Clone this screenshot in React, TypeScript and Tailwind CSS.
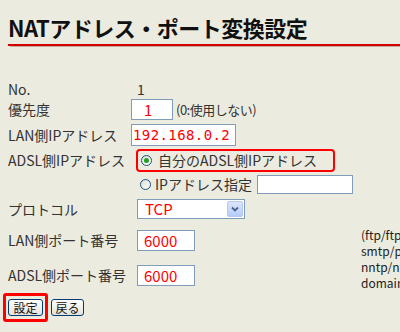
import React from "react";

const font = { fontFamily: '"Noto Sans CJK JP", "DejaVu Sans", sans-serif' };

function Radio({ checked }: { checked?: boolean }) {
  return (
    <span className="relative inline-flex h-[11px] w-[11px] shrink-0 items-center justify-center rounded-full border border-[#1c5180] bg-gradient-to-br from-[#dcdcd5] to-white">
      {checked && <span className="h-[5px] w-[5px] rounded-full bg-[#21a121]" />}
    </span>
  );
}

function Box({ w, children, h = 21 }: { w: number; h?: number; children?: React.ReactNode }) {
  return (
    <div
      className="flex items-center border border-[#7f9db9] bg-white pl-[6px] text-[15px] leading-none text-[#ff0000]"
      style={{ width: w, height: h }}
    >
      {children}
    </div>
  );
}

export default function App() {
  return (
    <div className="h-[332px] w-[400px] overflow-hidden bg-[#ecebdf] text-[#333]" style={font}>
      {/* header */}
      <div className="pl-[8px] pt-[12px]">
        <div className="text-[22px] font-bold leading-[30px] tracking-[-0.5px] text-[#111]">
          NATアドレス・ポート変換設定
        </div>
      </div>
      <div className="ml-[8px] mt-[2px] h-[2px] bg-[#d40000]" />
      <div className="ml-[10px] h-[1px] bg-[#c9a9a0]" />

      {/* form */}
      <div className="mt-[32px] flex flex-col pl-[8px] text-[14px]">
        <div className="flex h-[20px] items-center">
          <div className="w-[129px]">No.</div>
          <div>1</div>
        </div>
        <div className="mt-[0px] flex h-[21px] items-center">
          <div className="w-[123px]">優先度</div>
          <Box w={42}>
            <span className="pl-[6px]">1</span>
          </Box>
          <span className="ml-[3px] text-[13px] tracking-[-0.5px]">(0:使用しない)</span>
        </div>
        <div className="mt-[4px] flex h-[22px] items-center">
          <div className="w-[123px]">LAN側IPアドレス</div>
          <Box w={105} h={22}>
            <span className="-ml-[5px] tracking-[0.4px]" style={{ fontFamily: '"DejaVu Sans Mono", monospace', fontSize: 14 }}>
              192.168.0.2
            </span>
          </Box>
        </div>
        <div className="mt-[3px] flex h-[23px] items-center">
          <div className="w-[128px]">ADSL側IPアドレス</div>
          <div className="flex h-[23px] w-[199px] items-center rounded-[4px] border-2 border-[#ff0000] pl-[3px]">
            <Radio checked />
            <span className="ml-[6px]">自分のADSL側IPアドレス</span>
          </div>
        </div>
        <div className="mt-[2px] flex h-[20px] items-center">
          <div className="w-[132px]" />
          <Radio />
          <span className="ml-[4px]">IPアドレス指定</span>
          <div className="ml-[5px] h-[19px] w-[96px] border border-[#7f9db9] bg-white" />
        </div>
        <div className="mt-[5px] flex h-[20px] items-center">
          <div className="w-[129px]">プロトコル</div>
          <div className="flex h-[20px] w-[108px] items-center justify-between border border-[#7f9db9] bg-white">
            <span className="pl-[7px] text-[15px] text-[#ff0000]">TCP</span>
            <span className="mr-[1px] flex h-[16px] w-[16px] items-center justify-center rounded-[2px] border border-[#b6c9f5] bg-gradient-to-b from-[#dbe6fd] to-[#b6ccf9]">
              <svg width="8" height="6" viewBox="0 0 8 6">
                <path d="M1 1.5 L4 4.5 L7 1.5" stroke="#4d6185" strokeWidth="1.8" fill="none" />
              </svg>
            </span>
          </div>
        </div>

        <div className="flex">
          <div className="flex flex-col">
            <div className="mt-[11px] flex h-[21px] items-center">
              <div className="w-[129px]">LAN側ポート番号</div>
              <Box w={58}>6000</Box>
            </div>
            <div className="mt-[14px] flex h-[21px] items-center">
              <div className="w-[129px]">ADSL側ポート番号</div>
              <Box w={58}>6000</Box>
            </div>
          </div>
          <div className="ml-[166px] mt-[8px] whitespace-nowrap text-[12px] leading-[16px] text-[#222]">
            <div>(ftp/ftp-data/telnet/</div>
            <div>smtp/pop3/http/</div>
            <div>nntp/ntp/https/</div>
            <div>domain/other)</div>
          </div>
        </div>

        <div className="-ml-[5px] mt-[2px] flex items-center">
          <div className="flex h-[29px] w-[45px] items-center justify-center rounded-[3px] border-[3px] border-[#ff0000]">
            <button className="flex h-[17px] w-[35px] items-center justify-center rounded-[3px] border border-[#003c74] bg-gradient-to-b from-white to-[#e3e2da] text-[12px] leading-none text-[#111]">
              設定
            </button>
          </div>
          <button className="ml-[3px] flex h-[17px] w-[33px] items-center justify-center rounded-[3px] border border-[#003c74] bg-gradient-to-b from-white to-[#e3e2da] text-[12px] leading-none text-[#111]">
            戻る
          </button>
        </div>
      </div>
    </div>
  );
}
